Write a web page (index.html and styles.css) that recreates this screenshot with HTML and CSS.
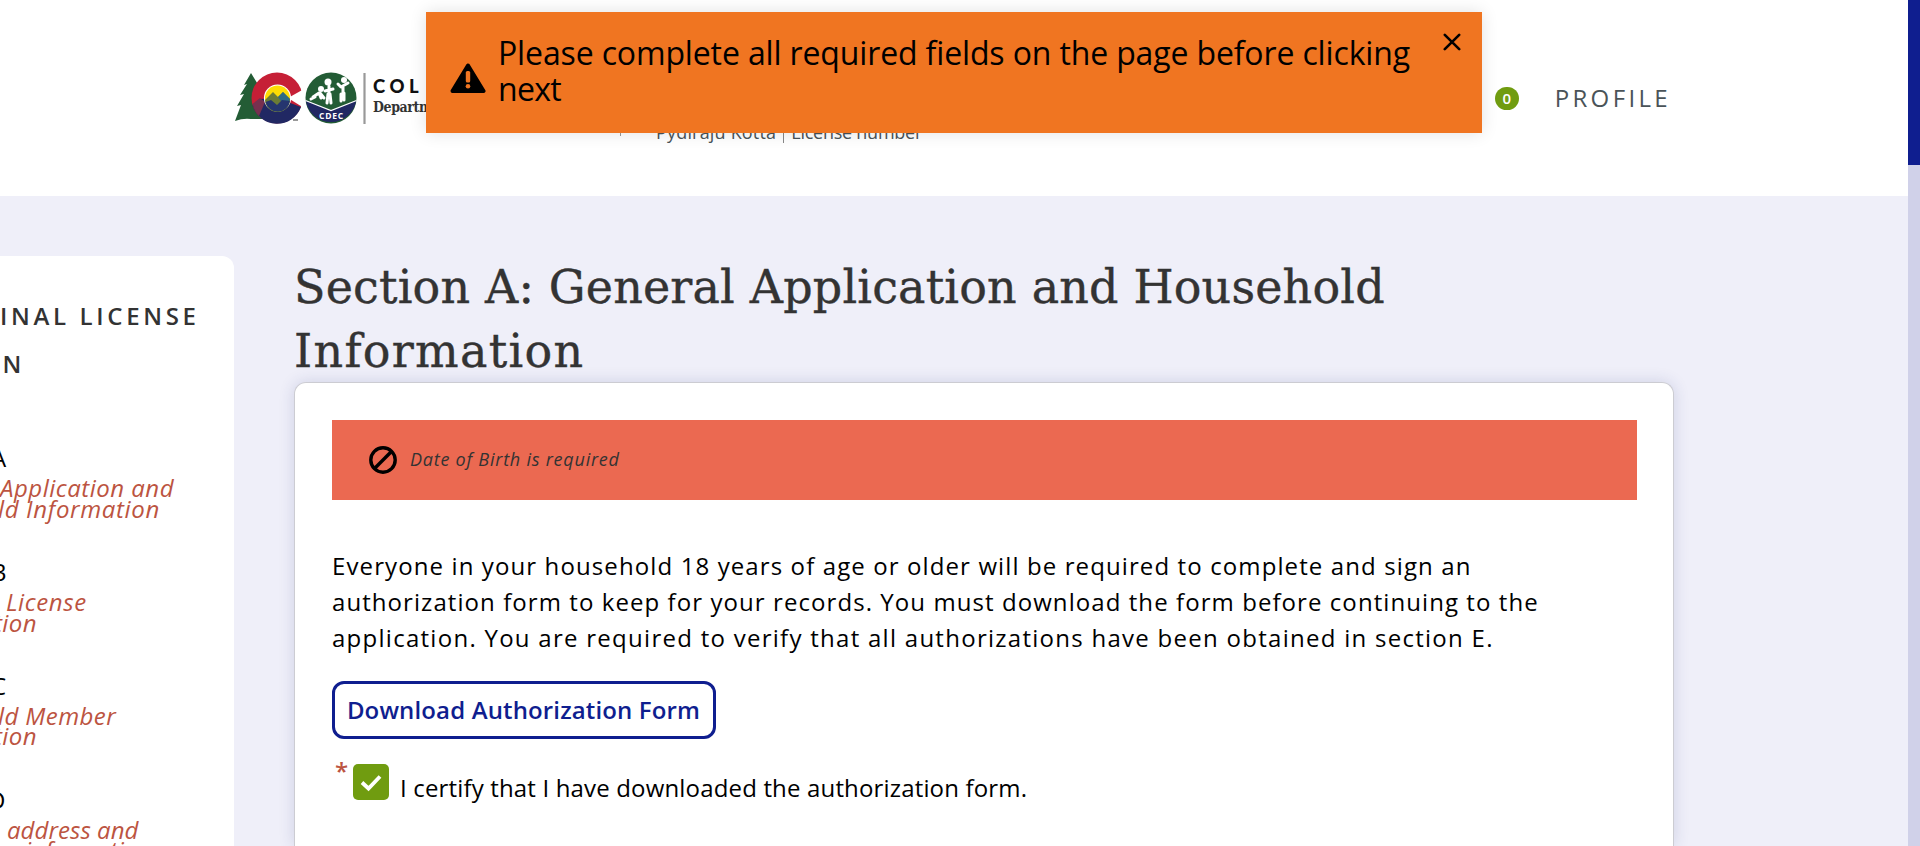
FILE: index.html
```html
<!DOCTYPE html>
<html lang="en">
<head>
<meta charset="utf-8">
<title>License Application</title>
<link rel="stylesheet" href="styles.css">
</head>
<body>
<header class="header">
  <div class="brand">
    <svg class="logo" width="134" height="54" viewBox="0 0 134 54">
      <path d="M17 2 L10 14 L13 13 L6 24 L10 23 L3 35 L7 34 L1 50 Q9 47 17 48 L32 48 L30 20 L25 15 Z" fill="#235c35"/>
      <circle cx="43" cy="27" r="25.500" fill="#c61f36"/>
      <path d="M18.500 34 L26 28 L43 27 L67 36 A25.500 25.500 0 0 1 18.500 34 Z" fill="#212863"/>
      <path d="M18.500 33 L26 27 L31 31 L25 45 Q20 40 18.500 33 Z" fill="#77304f"/>
      <path d="M54 27 L70 18 L70 37 Z" fill="#fff"/>
      <circle cx="43.500" cy="27" r="13.600" fill="#fff"/>
      <circle cx="43.500" cy="27" r="12.500" fill="#fddc04"/>
      <path d="M31 29 L39 21 L44 26 L49 21 L56 28 A12.500 12.500 0 0 1 31 29 Z" fill="#6b7c36"/>
      <path d="M44 26 L49 21 L56 28 L54 33 L47 30 Z" fill="#2f6a83"/>
      <path d="M31.500 31 L37 29 L43 34 L48 29 L56 30 A12.500 12.500 0 0 1 31.500 31 Z" fill="#25356f"/>
      <path d="M59 49h5" stroke="#555" stroke-width="1.200"/>
      <circle cx="97" cy="27" r="25.500" fill="#235c35"/>
      <path d="M71.800 29.500 L97 39.500 L122.200 29.500 A25.500 25.500 0 0 1 71.800 29.500 Z" fill="#212863"/>
      <path d="M71.500 29.500 L97 39.500 L122.500 29.500" fill="none" stroke="#fff" stroke-width="1.300"/>
      <g fill="none" stroke="#fff" stroke-linecap="round" stroke-linejoin="round" stroke-width="3">
        <path d="M79 26 L85 22 L87 27 M77 28 L81 26 M86 22 L90 27"/>
        <path d="M95 15 V23 M94 23 L93 32 M96 23 L97 32 M91 20 L99 18"/>
        <path d="M109 15 V22 M107 23 L107 30 M110 22 L110 29 M104 13 L107 16 L114 12"/>
      </g>
      <g fill="#fff"><circle cx="87" cy="18" r="3"/><circle cx="94" cy="11" r="3.500"/><circle cx="110" cy="9" r="3"/></g>
      <text class="logo-mark" x="97.500" y="48" text-anchor="middle">CDEC</text>
      <path d="M130.500 2v51" stroke="#999" stroke-width="2.200"/>
    </svg>
    <div class="brand-text">
      <div class="brand-state">COL</div>
      <div class="brand-dept">Departn</div>
    </div>
  </div>
  <div class="account">
    <span class="account-name">Pydiraju Kotta</span>
    <span class="account-license">License number</span>
  </div>
  <nav class="nav">
    <span class="count">0</span>
    <a class="profile">PROFILE</a>
  </nav>
</header>

<div class="layout">
  <aside class="sidebar">
    <h2 class="side-title"><span>INAL LICENSE</span><span class="side-title-end">ON</span></h2>
    <ul class="steps">
      <li class="step"><div class="step-letter">A</div><div class="step-line app">Application and</div><div class="step-line info">ld Information</div></li>
      <li class="step"><div class="step-letter">B</div><div class="step-line lic">License</div><div class="step-line tion">tion</div></li>
      <li class="step"><div class="step-letter">C</div><div class="step-line member">ld Member</div><div class="step-line tion">tion</div></li>
      <li class="step"><div class="step-letter letter-d">D</div><div class="step-line addr">address and</div><div class="step-line last">information</div></li>
    </ul>
  </aside>
  <main class="main">
    <h1 class="title"><span>Section A: General Application and Household</span><span class="title-end">Information</span></h1>
    <section class="card">
      <div class="alert">
        <svg width="28" height="28" viewBox="0 0 28 28"><circle cx="14" cy="14" r="12.200" fill="none" stroke="#000" stroke-width="3.400"/><path d="M5.800 22.200 L22.200 5.800" stroke="#000" stroke-width="3.400"/></svg>
        <span class="alert-text">Date of Birth is required</span>
      </div>
      <p class="intro"><span class="l1">Everyone in your household 18 years of age or older will be required to complete and sign an</span><span class="l2">authorization form to keep for your records. You must download the form before continuing to the</span><span class="l3">application. You are required to verify that all authorizations have been obtained in section E.</span></p>
      <button class="download">Download Authorization Form</button>
      <div class="certify">
        <span class="required">*</span>
        <span class="checkbox"><svg width="36" height="36" viewBox="0 0 36 36"><path d="M9 18.500 L15.500 24.500 L27 12.500" fill="none" stroke="#fff" stroke-width="3.800"/></svg></span>
        <span class="certify-label">I certify that I have downloaded the authorization form.</span>
      </div>
    </section>
  </main>
</div>

<div class="toast">
  <svg class="toast-icon" width="36" height="31" viewBox="0 0 36 31"><path d="M18 2.500 L33.500 28 H2.500 Z" fill="#000" stroke="#000" stroke-width="4" stroke-linejoin="round"/><rect x="15.800" y="8" width="4.400" height="11.500" rx="1.500" fill="#f07521"/><circle cx="18" cy="23.300" r="2.300" fill="#f07521"/></svg>
  <div class="toast-text"><span>Please complete all required fields on the page before clicking</span><span class="toast-end">next</span></div>
  <svg class="toast-close" width="18" height="18" viewBox="0 0 18 18"><path d="M1.800 1.800 L16.200 16.200 M16.200 1.800 L1.800 16.200" stroke="#000" stroke-width="2.600" stroke-linecap="round"/></svg>
</div>
<div class="scrollbar"><div class="thumb"></div></div>
</body>
</html>
```
FILE: styles.css
```css
* { box-sizing: border-box; }
body {
  margin: 0;
  height: 846px;
  overflow: hidden;
  background: #efeff9;
  color: #000;
  font: 24px/36px "Open Sans", sans-serif;
}
.header {
  display: flex;
  align-items: flex-start;
  height: 196px;
  padding-left: 234px;
  background: #fff;
}
.brand { display: flex; width: 387px; height: 65px; margin-top: 71px; border-right: 1px solid #999; }
.logo { flex: none; display: block; }
.logo-mark { font: bold 8.500px "Open Sans", sans-serif; letter-spacing: .8px; fill: #fff; }
.brand-text { padding: 3px 0 0 5px; white-space: nowrap; }
.brand-state { font: 900 18.500px/24px Lato, sans-serif; letter-spacing: 4.600px; color: #111; }
.brand-dept { font: bold 14px/18px "DejaVu Serif Condensed", "DejaVu Serif", serif; color: #333; letter-spacing: -.4px; }
.account {
  display: flex;
  margin: 120px 0 0 35px;
  font-size: 18px;
  line-height: 25px;
  color: #4a5358;
  white-space: nowrap;
}
.account-name { letter-spacing: .18px; padding-right: 7px; border-right: 1px solid #888; height: 23px; }
.account-license { letter-spacing: -.25px; padding-left: 7px; }
.nav { display: flex; align-items: center; margin: 80px 261px 0 auto; color: #4a5358; height: 36px; }
.count {
  width: 24px;
  height: 23px;
  border-radius: 12px;
  background: #709c10;
  color: #fff;
  font-size: 15px;
  font-weight: 600;
  line-height: 23px;
  text-align: center;
}
.profile { margin-left: 36px; letter-spacing: 3.350px; margin-right: -12px; }
.layout { display: flex; align-items: flex-start; height: 650px; overflow: hidden; }
.sidebar {
  flex: none;
  width: 234px;
  height: 590px;
  margin-top: 60px;
  padding-top: 36px;
  border-radius: 0 12px 0 0;
  background: #fff;
  white-space: nowrap;
  overflow: hidden;
}
.side-title { margin: 0; font-size: 24px; line-height: 48px; font-weight: 600; letter-spacing: 3.670px; color: #333; }
.side-title span { display: block; }
.side-title .side-title-end { margin-left: -20px; }
.steps { list-style: none; margin: 54px 0 0; padding: 0; display: grid; row-gap: 37.500px; }
.step-letter { height: 36px; line-height: 31px; margin-left: -9px; }
.step { height: 76.400px; }
.letter-d { margin-left: -12px; }
.step-line { font-style: italic; line-height: 20.700px; color: #bc5441; letter-spacing: .4px; }
.app { letter-spacing: .5px; }
.info { margin-left: -2px; letter-spacing: .65px; }
.lic { margin-left: 6px; letter-spacing: .6px; }
.tion { margin-left: -6px; }
.member { margin-left: -2px; }
.addr { margin-left: 7px; letter-spacing: .05px; }
.last { margin-left: 25px; letter-spacing: 0; }
.main { flex: none; width: 1380px; margin: 59px 0 0 60px; }
.title {
  margin: 0;
  padding-top: 1px;
  height: 127px;
  font: 46px/63.500px "DejaVu Serif", serif;
  letter-spacing: .17px;
  color: #333;
  white-space: nowrap;
  -webkit-text-stroke: .4px #333;
}
.title span { display: block; }
.title .title-end { letter-spacing: 1.300px; }
.card {
  height: 464px;
  padding: 37px 36px 0 37px;
  border: 1px solid #ccccd2;
  border-bottom: 0;
  border-radius: 12px 12px 0 0;
  background: #fff;
  box-shadow: 0 0 16px rgba(40, 50, 120, .16);
}
.alert { display: flex; align-items: center; height: 80px; padding-left: 37px; background: #eb6951; }
.alert-text { margin: -2px 0 0 13px; font-size: 18px; font-style: italic; letter-spacing: .77px; color: #333; }
.intro { margin: 48px 0 25px; white-space: nowrap; }
.intro span { display: block; }
.l1 { letter-spacing: 1.110px; }
.l2 { letter-spacing: 1.070px; }
.l3 { letter-spacing: 1.270px; }
.download {
  display: block;
  width: 384px;
  height: 58px;
  padding: 0 1px 0 0;
  border: 3px solid #0f1e8f;
  border-radius: 12px;
  background: #fff;
  color: #0f1e8f;
  font: 600 24px/36px "Open Sans", sans-serif;
  letter-spacing: .14px;
}
.certify { display: flex; margin-top: 25px; }
.required { width: 21px; padding-left: 3px; line-height: 13px; font-weight: 600; color: #bc5441; }
.checkbox { width: 36px; height: 36px; border-radius: 5px; background: #709c10; }
.checkbox svg { display: block; }
.certify-label { margin: 6px 0 0 11px; letter-spacing: .16px; }
.toast {
  position: absolute;
  left: 426px;
  top: 12px;
  width: 1056px;
  height: 121px;
  display: flex;
  padding: 22px 21px 0 24px;
  background: #f07521;
  box-shadow: 0 0 16px rgba(0, 0, 0, .12);
  font-size: 32px;
  line-height: 36px;
  letter-spacing: -.14px;
  white-space: nowrap;
}
.toast-icon { margin-top: 29px; flex: none; }
.toast-text { margin: 1px 0 0 12px; }
.toast-text span { display: block; }
.toast-text .toast-end { letter-spacing: -.7px; }
.toast-close { margin: -1px 0 0 auto; flex: none; }
.scrollbar { position: absolute; right: 0; top: 0; width: 12px; height: 846px; background: #d0d1e9; }
.thumb { height: 165px; background: #0f1e8f; }
```
